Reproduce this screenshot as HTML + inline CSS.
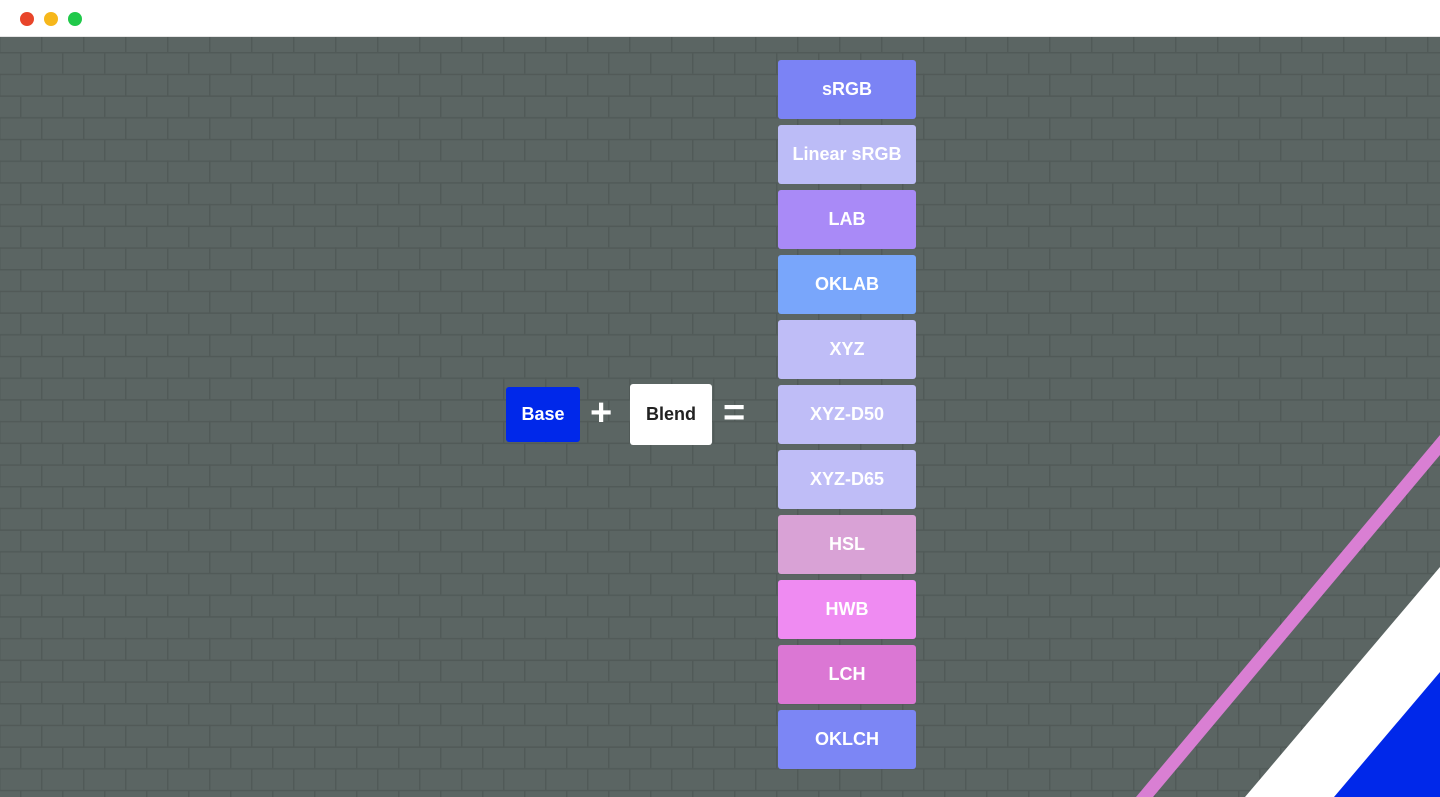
<!DOCTYPE html>
<html><head><meta charset="utf-8"><style>
*{margin:0;padding:0;box-sizing:border-box}
body{width:1440px;height:797px;background:#fff;overflow:hidden;position:relative;font-family:"Liberation Sans",sans-serif}
.bar{position:absolute;left:0;top:0;width:1440px;height:37px;background:#fff;border-bottom:1px solid #e5e5e5}
.dot{position:absolute;top:12px;width:14px;height:14px;border-radius:50%}
.stage{position:absolute;left:0;top:37px;width:1440px;height:760px;overflow:hidden}
.btn{position:absolute;left:778px;width:138px;height:59px;border-radius:3px;color:#fff;font-weight:bold;font-size:18px;display:flex;align-items:center;justify-content:center}
</style></head><body>
<div class="bar">
<div class="dot" style="left:20px;background:#e8452a"></div>
<div class="dot" style="left:44px;background:#f6b71b"></div>
<div class="dot" style="left:68px;background:#20c94a"></div>
</div>
<div class="stage">
<svg width="1440" height="760" style="position:absolute;left:0;top:0">
<defs><pattern id="b" width="84" height="43.4" patternUnits="userSpaceOnUse" x="20" y="15">
<rect width="84" height="43.4" fill="#5b6563"/>
<rect x="0" y="0" width="84" height="1.5" fill="#515a58"/>
<rect x="0" y="21.7" width="84" height="1.5" fill="#515a58"/>
<rect x="0" y="0" width="1.5" height="21.7" fill="#515a58"/>
<rect x="42" y="0" width="1.5" height="21.7" fill="#515a58"/>
<rect x="21" y="21.7" width="1.5" height="21.7" fill="#515a58"/>
<rect x="63" y="21.7" width="1.5" height="21.7" fill="#515a58"/>
</pattern></defs>
<rect width="1440" height="760" fill="url(#b)"/>
<polygon points="1440,398 1440,418 1153,760 1136,760" fill="#d97fd3"/>
<polygon points="1440,530 1440,760 1245,760" fill="#fff"/>
<polygon points="1440,635 1440,760 1334,760" fill="#0028ea"/>
</svg>
</div>
<div style="position:absolute;left:506px;top:387px;width:74px;height:55px;background:#0028ea;border-radius:3px;color:#fff;font-weight:bold;font-size:18px;display:flex;align-items:center;justify-content:center">Base</div>
<div style="position:absolute;left:590px;top:394px;color:#fff;font-weight:bold;font-size:38px;line-height:38px">+</div>
<div style="position:absolute;left:630px;top:384px;width:82px;height:61px;background:#fff;border-radius:3px;color:#222;font-weight:bold;font-size:18px;display:flex;align-items:center;justify-content:center">Blend</div>
<div style="position:absolute;left:723px;top:394px;color:#fff;font-weight:bold;font-size:38px;line-height:38px">=</div>
<div class="btn" style="top:60px;background:#7b83f5">sRGB</div>
<div class="btn" style="top:125px;background:#bcbcf7">Linear sRGB</div>
<div class="btn" style="top:190px;background:#a98af7">LAB</div>
<div class="btn" style="top:255px;background:#79a6fb">OKLAB</div>
<div class="btn" style="top:320px;background:#bfbdf7">XYZ</div>
<div class="btn" style="top:385px;background:#bfbdf7">XYZ-D50</div>
<div class="btn" style="top:450px;background:#bfbdf7">XYZ-D65</div>
<div class="btn" style="top:515px;background:#d9a2d6">HSL</div>
<div class="btn" style="top:580px;background:#ef8bf2">HWB</div>
<div class="btn" style="top:645px;background:#db77d4">LCH</div>
<div class="btn" style="top:710px;background:#7c86f5">OKLCH</div>
</body></html>
